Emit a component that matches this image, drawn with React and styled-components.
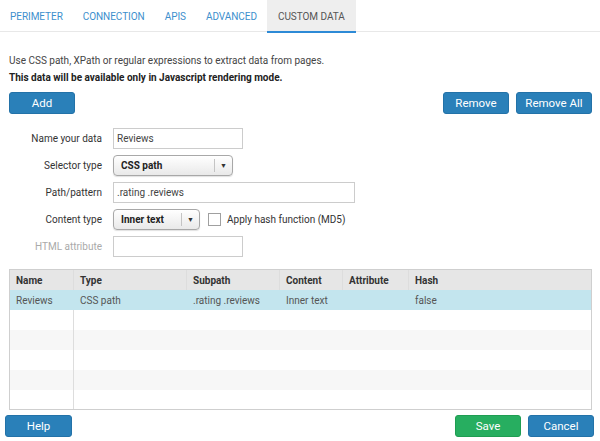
import React from 'react'
import styled, { createGlobalStyle } from 'styled-components'

const GlobalStyle = createGlobalStyle`
  html, body {
    margin: 0;
    padding: 0;
    background: #ffffff;
  }
  body {
    font-family: Roboto, "Liberation Sans", sans-serif;
    font-size: 10px;
    color: #333333;
  }
`

const Page = styled.div`
  width: 600px;
  height: 441px;
  display: flex;
  flex-direction: column;
  overflow: hidden;
`

const TabBar = styled.div`
  display: flex;
  height: 32px;
  border-bottom: 1px solid #e8e8e8;
  box-sizing: border-box;
`

const Tab = styled.div`
  display: flex;
  align-items: center;
  padding: 2px ${p => (p.active ? 11 : 10)}px 0;
  font-size: 10px;
  letter-spacing: -0.05px;
  text-transform: uppercase;
  color: ${p => (p.active ? '#555555' : '#3d8fcd')};
  background: ${p => (p.active ? '#eeeeee' : 'transparent')};
  border-bottom: 2px solid ${p => (p.active ? '#2d8ad6' : 'transparent')};
  box-sizing: border-box;
  height: 33px;
`

const Body = styled.div`
  padding: 20px 8px 0 9px;
  display: flex;
  flex-direction: column;
`

const Note = styled.p`
  margin: 0;
  line-height: 17px;
  color: ${p => (p.strong ? '#222222' : '#444444')};
  font-weight: ${p => (p.strong ? 700 : 400)};
`

const ActionRow = styled.div`
  display: flex;
  justify-content: space-between;
  margin-top: 6px;
`

const ButtonGroup = styled.div`
  display: flex;
  gap: 7px;
`

const Button = styled.button`
  height: 22px;
  width: ${p => p.w || 66}px;
  border: 1px solid ${p => (p.green ? '#1f9d52' : '#2372a8')};
  border-radius: 3px;
  background: ${p => (p.green ? '#27ae60' : '#2a80b9')};
  color: #ffffff;
  font-family: Roboto, "Liberation Sans", sans-serif;
  font-size: 11.5px;
  padding: 0;
  cursor: pointer;
`

const Form = styled.div`
  display: grid;
  grid-template-columns: 93px auto;
  column-gap: 11px;
  row-gap: 6px;
  margin-top: 14px;
  align-items: center;
`

const Label = styled.label`
  text-align: right;
  color: ${p => (p.muted ? '#aaaaaa' : '#333333')};
`

const Input = styled.input`
  box-sizing: border-box;
  width: ${p => p.w}px;
  height: 21px;
  border: 1px solid #cccccc;
  padding: 0 3px;
  font-family: Roboto, "Liberation Sans", sans-serif;
  font-size: 10px;
  color: #444444;
  outline: none;
`

const Controls = styled.div`
  display: flex;
  align-items: center;
  gap: 6px;
`

const Select = styled.div`
  box-sizing: border-box;
  width: ${p => p.w}px;
  height: 21px;
  display: flex;
  align-items: center;
  border: 1px solid #a8a8a8;
  border-radius: 4px;
  background: linear-gradient(#ffffff, #e9e9e9);
  box-shadow: 0 1px 1px rgba(0, 0, 0, 0.12);
  font-weight: 700;
  color: #222222;
`

const SelectValue = styled.span`
  flex: 1;
  padding-left: 7px;
`

const SelectArrow = styled.span`
  width: 17px;
  height: 13px;
  border-left: 1px solid #c4c4c4;
  display: flex;
  align-items: center;
  justify-content: center;
  font-size: 7px;
  color: #333333;
`

const Check = styled.span`
  width: 11px;
  height: 11px;
  border: 1px solid #a0a0a0;
  background: #ffffff;
  margin-left: 2px;
`

const CheckLabel = styled.span`
  color: #333333;
`

const Table = styled.div`
  margin-top: 12px;
  border: 1px solid #cfcfcf;
  height: 141px;
  box-sizing: border-box;
  overflow: hidden;
`

const Row = styled.div`
  display: grid;
  grid-template-columns: 64px 113px 93px 63px 66px 1fr;
  height: 20px;
  background: ${p =>
    p.head ? '#e6e6e6' : p.selected ? '#c3e5ee' : p.odd ? '#f7f7f7' : '#ffffff'};
  font-weight: ${p => (p.head ? 700 : 400)};
  color: ${p => (p.head ? '#333333' : '#555555')};
`

const Cell = styled.div`
  display: flex;
  align-items: center;
  padding-left: 6px;
  border-right: 1px solid ${p => (p.line ? '#dddddd' : 'transparent')};
  &:last-child {
    border-right: none;
  }
`

const Footer = styled.div`
  display: flex;
  justify-content: space-between;
  padding: 5px 6px 0 5px;
`

const columns = ['Name', 'Type', 'Subpath', 'Content', 'Attribute', 'Hash']
const data = [['Reviews', 'CSS path', '.rating .reviews', 'Inner text', '', 'false']]

export default function App() {
  const tabs = ['Perimeter', 'Connection', 'APIs', 'Advanced', 'Custom data']
  return (
    <Page>
      <GlobalStyle />
      <TabBar>
        {tabs.map(t => (
          <Tab key={t} active={t === 'Custom data'}>{t}</Tab>
        ))}
      </TabBar>
      <Body>
        <Note>Use CSS path, XPath or regular expressions to extract data from pages.</Note>
        <Note strong>This data will be available only in Javascript rendering mode.</Note>
        <ActionRow>
          <Button>Add</Button>
          <ButtonGroup>
            <Button>Remove</Button>
            <Button w={76}>Remove All</Button>
          </ButtonGroup>
        </ActionRow>
        <Form>
          <Label>Name your data</Label>
          <Controls><Input w={130} defaultValue="Reviews" /></Controls>
          <Label>Selector type</Label>
          <Controls>
            <Select w={120}>
              <SelectValue>CSS path</SelectValue>
              <SelectArrow>▼</SelectArrow>
            </Select>
          </Controls>
          <Label>Path/pattern</Label>
          <Controls><Input w={242} defaultValue=".rating .reviews" /></Controls>
          <Label>Content type</Label>
          <Controls>
            <Select w={87}>
              <SelectValue>Inner text</SelectValue>
              <SelectArrow>▼</SelectArrow>
            </Select>
            <Check />
            <CheckLabel>Apply hash function (MD5)</CheckLabel>
          </Controls>
          <Label muted>HTML attribute</Label>
          <Controls><Input w={130} /></Controls>
        </Form>
        <Table>
          <Row head>
            {columns.map(c => <Cell key={c} line>{c}</Cell>)}
          </Row>
          {data.map((r, i) => (
            <Row key={i} selected>
              {r.map((v, j) => <Cell key={j}>{v}</Cell>)}
            </Row>
          ))}
          {[0, 1, 2, 3, 4].map(i => (
            <Row key={'e' + i} odd={i % 2 === 1}>
              <Cell line />
              <Cell /><Cell /><Cell /><Cell /><Cell />
            </Row>
          ))}
        </Table>
      </Body>
      <Footer>
        <Button w={67}>Help</Button>
        <ButtonGroup>
          <Button green>Save</Button>
          <Button>Cancel</Button>
        </ButtonGroup>
      </Footer>
    </Page>
  )
}
